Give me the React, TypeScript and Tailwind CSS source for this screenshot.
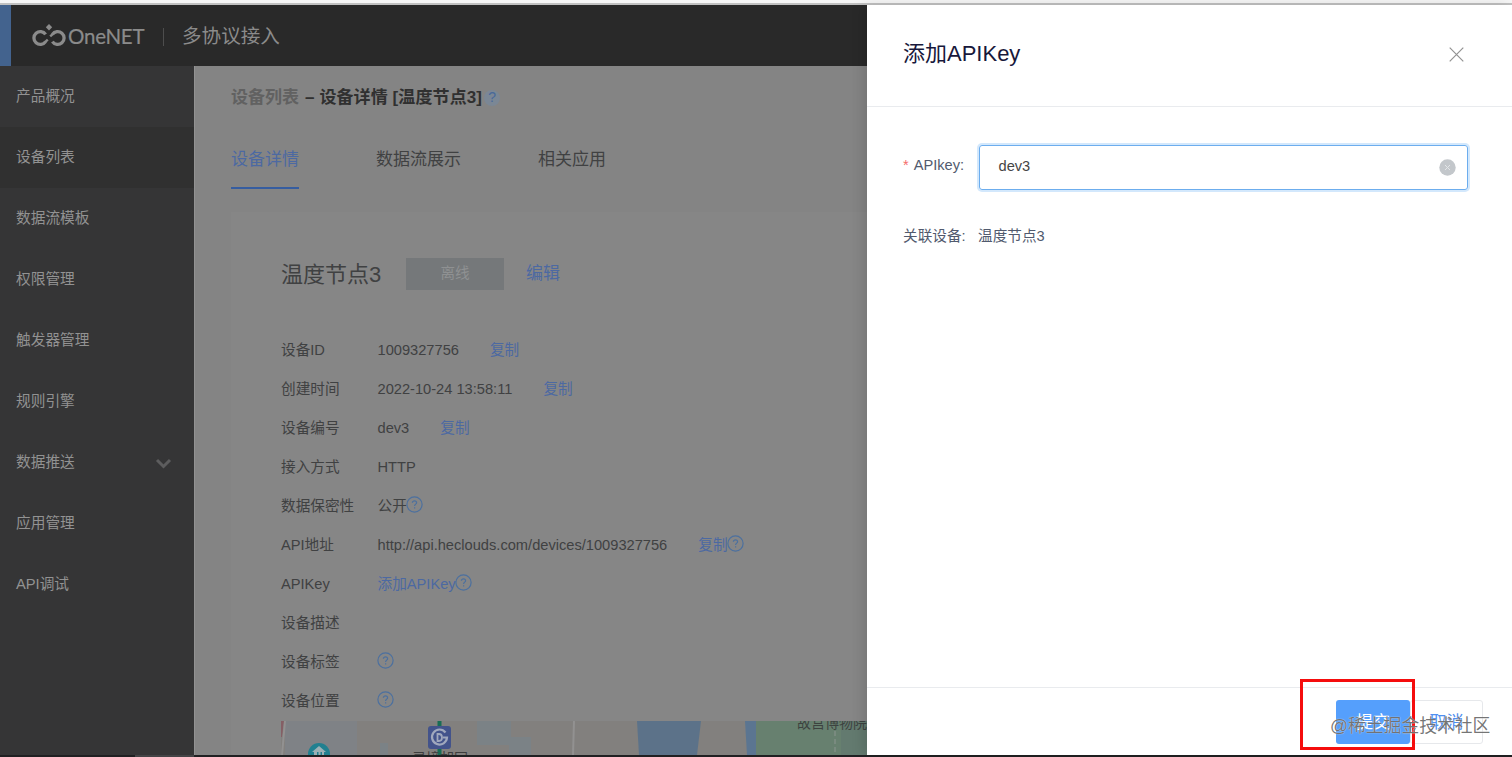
import { ReactNode } from "react";

const menu = [
  { label: "产品概况" },
  { label: "设备列表", active: true },
  { label: "数据流模板" },
  { label: "权限管理" },
  { label: "触发器管理" },
  { label: "规则引擎" },
  { label: "数据推送", expandable: true },
  { label: "应用管理" },
  { label: "API调试" },
];

const HelpIcon = () => (
  <svg
    className="w-[17px] h-[17px] shrink-0 -ml-px -mt-[5px] text-[#4c709f]"
    viewBox="0 0 17 17"
    fill="none"
    stroke="currentColor"
    strokeWidth="1.2"
  >
    <circle cx="8.5" cy="8.5" r="7.6" />
    <path d="M6.4 6.8c0-1.2.9-2 2.1-2s2.1.8 2.1 1.9c0 1.4-2 1.5-2 3.2M8.6 11.2v1.2" />
  </svg>
);

const Logo = () => (
  <svg
    className="w-[34px] h-[23px]"
    viewBox="0 0 34 23"
    fill="none"
    stroke="#8b8b8b"
    strokeWidth="3.3"
  >
    <path d="M13.6 10.4A6.4 6.4 0 1 0 13.6 17.600" />
    <path d="M20.400 10.400A6.400 6.400 0 1 1 20.400 17.600" />
    <path d="M13 18.200l2.800-2.600M21 9.800l-2.800 2.600" strokeWidth="2.400" />
    <path d="M17 0l3.200 3.200L17 6.400l-3.200-3.200z" fill="#8b8b8b" stroke="none" />
  </svg>
);

interface RowProps {
  label: string;
  value?: string;
  link?: string;
  help?: boolean;
}

const Row = ({ label, value, link, help }: RowProps) => (
  <div className="flex items-center h-[39px]">
    <span className="w-[96.5px]">{label}</span>
    {value && <span>{value}</span>}
    {link && (
      <span className={value ? "ml-[31px] text-[#4c69a2]" : "text-[#4c69a2]"}>
        {link}
      </span>
    )}
    {help && <HelpIcon />}
  </div>
);

const MapPreview = () => (
  <svg className="block w-[586px] h-[34px]" viewBox="0 0 586 34">
    <rect width="586" height="34" fill="#82807e" />
    <path d="M4 0h72v34H4z" fill="#7f8286" />
    <path d="M0 0h3L1 16H0z" fill="#855f65" />
    <path d="M99 22h8v12h-8zM196 0h34v24h-34zM228 16h22v18h-22z" fill="#7b8286" />
    <path d="M4 0L1 34M293 0l-1 34M488 0l4 34" stroke="#929191" strokeWidth="2" />
    <path d="M356 0h64l-4 34h-58z" fill="#5c7289" />
    <path d="M464 0h12v34h-10z" fill="#5b7591" />
    <path d="M475 0h111v34H475z" fill="#67806f" />
    <path d="M560 0h26v34h-26z" fill="#637a6f" />
    <path d="M554 10v24" stroke="#8c9590" strokeDasharray="5 3" />
    <circle cx="38" cy="33" r="11" fill="#218090" />
    <path d="M31 31l7-6 7 6h-2v4H33v-4z" fill="#9bb0b5" />
    <path d="M36 31h1.5v3H36zM39.500 31H41v3h-1.500z" fill="#218090" />
    <rect x="156.500" width="4" height="34" fill="#176d55" />
    <rect x="147" y="5" width="23" height="23" rx="3" fill="#43538b" />
    <path
      d="M164.500 11.500a7.500 7.500 0 1 0 1.500 5h-4"
      fill="none"
      stroke="#a0a8bd"
      strokeWidth="2.200"
    />
    <path
      d="M156.500 13v7h1.500c4 0 4-7 0-7z"
      fill="none"
      stroke="#a0a8bd"
      strokeWidth="1.800"
    />
    <text x="131" y="42" fontSize="14" fill="#3d3d3d">
      灵境胡同
    </text>
    <text x="516" y="7" fontSize="14" fill="#3d4240">
      故宫博物院
    </text>
  </svg>
);

const Tab = ({ children, active }: { children: ReactNode; active?: boolean }) => (
  <div
    className={
      active
        ? "h-[58px] pt-[16px] border-b-2 border-[#365da0] text-[#4c69a2]"
        : "h-[58px] pt-[16px]"
    }
  >
    {children}
  </div>
);

const Sidebar = () => (
  <nav className="w-[194px] shrink-0 bg-[#353536] text-[14.7px] text-[#929292]">
    {menu.map((item) => (
      <div
        key={item.label}
        className={
          item.active
            ? "flex items-center justify-between h-[61px] pl-4 pr-[22px] bg-[#303030]"
            : "flex items-center justify-between h-[61px] pl-4 pr-[22px]"
        }
      >
        {item.label}
        {item.expandable && (
          <svg
            className="w-[17px] h-[12px] mt-[3px]"
            viewBox="0 0 17 12"
            fill="none"
            stroke="#5d5d5e"
            strokeWidth="3"
          >
            <path d="M2 2l6.500 6.500L15 2" />
          </svg>
        )}
      </div>
    ))}
  </nav>
);

const DevicePage = () => (
  <div className="flex flex-col w-[867px] shrink-0">
    <header className="flex items-center h-[61px] shrink-0 bg-[#292929] text-[#8b8b8b]">
      <div className="w-[11px] h-full bg-[#43638e]" />
      <div className="flex items-center ml-[21px]">
        <Logo />
        <span className="ml-[2px] w-[78px] mt-[2px] text-[20.5px] tracking-[-0.25px] [font-family:Lato,sans-serif] [-webkit-text-stroke:0.2px_#8b8b8b]">
          OneNET
        </span>
        <span className="w-px h-[18px] ml-[17px] mt-[3px] bg-[#4d4d4d]" />
        <span className="ml-[18px] mt-[2px] text-[19.6px]">多协议接入</span>
      </div>
    </header>
    <div className="flex flex-1 min-h-0">
      <Sidebar />
      <main className="flex-1 min-w-0 border-l border-[#929292] bg-[#848484] pl-9 text-[#404142]">
        <div className="flex items-center h-[62px] pt-px text-[17px] font-bold text-[#303030]">
          <span className="text-[#616161]">设备列表</span>
          <span className="ml-[6px] tracking-[0.1px]">– 设备详情 [温度节点3]</span>
          <span className="flex items-center justify-center w-4 h-4 ml-[2px] rounded-full bg-[#7b8795] text-[14px] font-normal text-[#48699a]">
            ?
          </span>
        </div>
        <div className="flex gap-[77px] h-[84px] pt-[3px] text-[17px] leading-[26px]">
          <Tab active>设备详情</Tab>
          <Tab>数据流展示</Tab>
          <Tab>相关应用</Tab>
        </div>
        <section className="h-[543px] pt-[46px] pl-[50px] bg-[#868686] overflow-hidden">
          <div className="flex items-center h-[32px]">
            <h1 className="w-[125px] text-[22px]">温度节点3</h1>
            <span className="flex items-center justify-center w-[98px] h-[32px] bg-[#75787a] text-[14.6px] text-[#8f9192]">
              离线
            </span>
            <span className="ml-[22px] text-[17px] text-[#4c69a2]">编辑</span>
          </div>
          <div className="mt-[41px] text-[14.65px]">
            <Row label="设备ID" value="1009327756" link="复制" />
            <Row label="创建时间" value="2022-10-24 13:58:11" link="复制" />
            <Row label="设备编号" value="dev3" link="复制" />
            <Row label="接入方式" value="HTTP" />
            <Row label="数据保密性" value="公开" help />
            <Row
              label="API地址"
              value="http://api.heclouds.com/devices/1009327756"
              link="复制"
              help
            />
            <Row label="APIKey" link="添加APIKey" help />
            <Row label="设备描述" />
            <Row label="设备标签" help />
            <Row label="设备位置" help />
          </div>
          <MapPreview />
        </section>
      </main>
    </div>
  </div>
);

const ApiKeyDrawer = () => (
  <aside className="relative z-10 flex flex-col flex-1 bg-white text-[14.65px] text-[#515a6e] shadow-[-4px_0_12px_rgba(0,0,0,0.12)]">
    <div className="flex items-center justify-between h-[102px] pl-9 pr-12 pb-[3px] border-b border-[#e9ebee]">
      <h2 className="pb-[2px] text-[22px] text-[#17183b]">添加APIKey</h2>
      <svg
        className="w-[15px] h-[15px]"
        viewBox="0 0 15 15"
        stroke="#929292"
        strokeWidth="1.2"
      >
        <path d="M.7.7l13.600 13.600M14.300.7L.7 14.300" />
      </svg>
    </div>
    <div className="flex-1 pt-[38px] pl-9 pr-11">
      <div className="flex items-center">
        <label className="w-[75.500px] pb-[3px] whitespace-nowrap">
          <span className="mr-[5px] text-[#f56c6c]">*</span>APIkey:
        </label>
        <div className="flex items-center justify-between flex-1 h-[45px] pl-[19px] pr-[11px] rounded-[3px] border border-[#6cadee] text-[#454545] shadow-[0_0_0_2px_#d3e8fc]">
          <span className="pb-px">dev3</span>
          <svg className="w-[17px] h-[17px]" viewBox="0 0 17 17">
            <circle cx="8.500" cy="8.500" r="8.200" fill="#c3c7cb" />
            <path d="M6 6l5 5M11 6l-5 5" stroke="#e3e6e8" />
          </svg>
        </div>
      </div>
      <div className="flex mt-[35px] leading-[22px]">
        <span className="w-[75px]">关联设备:</span>
        <span>温度节点3</span>
      </div>
    </div>
    <footer className="flex justify-end h-[68px] pt-3 pr-[29px] border-t border-[#e9ebee] text-[17px]">
      <button className="w-[74px] h-[44px] pt-[2px] rounded-[3px] bg-[#559ffc] text-white">
        提交
      </button>
      <button className="w-[73px] h-[44px] pt-[2px] rounded-[3px] border border-[#e6e8eb] text-[#4f8ff0]">
        取消
      </button>
    </footer>
    {/* highlight frame and watermark over the footer */}
    <div className="absolute left-[433px] top-[674px] w-[115px] h-[71px] border-[3px] border-[#f50d0d]" />
    <div className="absolute left-[463px] top-[708px] text-[17.8px] leading-[26px] whitespace-nowrap text-[#5c5c5c]/85 [text-shadow:0_0_1px_#fff]">
      @稀土掘金技术社区
    </div>
  </aside>
);

export default function App() {
  return (
    <div className="flex flex-col w-[1512px] h-[757px] overflow-hidden bg-white [font-family:'Liberation_Sans','Noto_Sans_CJK_SC',sans-serif]">
      <div className="h-[5px] shrink-0 border-b-2 border-[#c1c1c1] bg-[#f6f6f6]" />
      <div className="flex h-[750px] shrink-0">
        <DevicePage />
        <ApiKeyDrawer />
      </div>
      <div className="h-[2px] shrink-0 bg-[#202022]">
        <div className="w-[59px] h-full ml-[135px] bg-[#444446]" />
      </div>
    </div>
  );
}
